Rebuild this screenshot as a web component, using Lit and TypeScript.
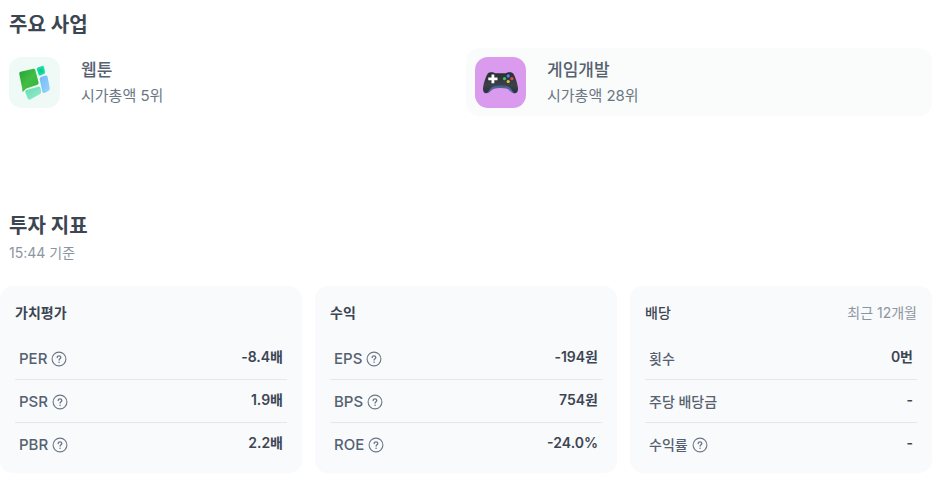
import { LitElement, html, css, svg, nothing } from "lit";
import { customElement, property } from "lit/decorators.js";

interface Metric {
  label: string;
  value: string;
  help?: boolean;
}

interface MetricGroup {
  title: string;
  note?: string;
  rows: Metric[];
}

const groups: MetricGroup[] = [
  {
    title: "가치평가",
    rows: [
      { label: "PER", value: "-8.4배", help: true },
      { label: "PSR", value: "1.9배", help: true },
      { label: "PBR", value: "2.2배", help: true },
    ],
  },
  {
    title: "수익",
    rows: [
      { label: "EPS", value: "-194원", help: true },
      { label: "BPS", value: "754원", help: true },
      { label: "ROE", value: "-24.0%", help: true },
    ],
  },
  {
    title: "배당",
    note: "최근 12개월",
    rows: [
      { label: "횟수", value: "0번" },
      { label: "주당 배당금", value: "-" },
      { label: "수익률", value: "-", help: true },
    ],
  },
];

const webtoonIcon = svg`
  <svg viewBox="0 0 51 51" aria-hidden="true">
    <defs>
      <linearGradient id="leaf" x1="0" y1="0" x2="1" y2="1">
        <stop offset="0" stop-color="#1ea532" /><stop offset="0.5" stop-color="#43bd46" /><stop offset="1" stop-color="#2fb63c" />
      </linearGradient>
      <linearGradient id="sky" x1="0" y1="0" x2="1" y2="1">
        <stop offset="0" stop-color="#73b9f8" /><stop offset="1" stop-color="#9bd3ff" />
      </linearGradient>
      <linearGradient id="mint" x1="0" y1="0" x2="1" y2="1">
        <stop offset="0" stop-color="#62dcae" /><stop offset="1" stop-color="#9aecd0" />
      </linearGradient>
      <radialGradient id="gem"><stop offset="0" stop-color="#00cf69" /><stop offset="1" stop-color="#25dfc0" /></radialGradient>
    </defs>
    <path fill="url(#leaf)" d="M11.5 14.7 24.4 11.8Q25.8 11.5 26.3 12.9L29.6 25.5Q29.9 27 28.5 27.8L17.3 31.6 14 34.8Q13.3 35 13.4 34L13.2 31.4 10.2 16.5Q10 15.1 11.5 14.7Z" />
    <path fill="url(#gem)" d="M28.6 10.5 33 8.9Q34.5 8.5 35 10L36.1 15Q36.3 16.4 35 17L31.7 18.6Q30.1 19 29.5 17.5L27.8 12.5Q27.4 11 28.6 10.5Z" />
    <path fill="url(#sky)" d="M32.4 19.7 36.3 18.6Q38 18.2 38.6 19.8L40.8 31.3Q41 33 39.6 33.8L36 35.8Q34.1 36.6 33.3 34.8L30.7 22.2Q30.3 20.3 32.4 19.7Z" />
    <path fill="url(#mint)" d="M17.4 33.1 29.2 29.7Q30.9 29.3 31.4 30.8L32.2 34.8Q32.4 36.2 31 37.1L21.4 42.4Q19.5 43.2 18.7 41.5L16.4 35.5Q15.8 33.7 17.4 33.1Z" />
  </svg>`;

const gamepadIcon = svg`
  <svg viewBox="0 0 51 51" aria-hidden="true">
    <defs>
      <linearGradient id="shell" x1="0" y1="0" x2="0" y2="1">
        <stop offset="0" stop-color="#292d33" /><stop offset="0.6" stop-color="#3b4149" /><stop offset="1" stop-color="#2b3039" />
      </linearGradient>
      <linearGradient id="glow" x1="0" y1="0" x2="0" y2="1">
        <stop offset="0" stop-color="#46587e" /><stop offset="1" stop-color="#5b80cf" />
      </linearGradient>
    </defs>
    <path fill="url(#shell)" d="M12.6 16.7C14.3 14.8 18.3 14.8 20 16.3H31C32.7 14.8 36.7 14.8 38.4 16.7C40.6 20.3 42.4 26.1 43 31C43.2 34.2 41.9 36.3 39.6 36.3C36.2 36.3 34.7 32.1 31.5 31.3C28 30.7 23 30.7 19.5 31.3C16.3 32.1 14.8 36.3 11.4 36.3C9.1 36.3 7.8 34.2 8 31C8.6 26.1 10.4 20.3 12.6 16.7Z" />
    <path fill="url(#glow)" d="M11.6 36.2C14.4 34.8 15 29.9 19.3 28.9C23 28.1 28 28.1 31.7 28.9C36 29.9 36.6 34.8 39.4 36.2C36.1 36.2 34.8 32.4 31.4 31.6C28 30.9 23 30.9 19.6 31.6C16.2 32.4 14.9 36.2 11.6 36.2Z" />
    <path fill="#fff" d="M16.5 17.4h2.8v3h3.2v2.8h-3.2v3h-2.8v-3h-3.2v-2.8h3.2Z" />
    <circle cx="33.2" cy="18.9" r="1.6" fill="#4d86ee" />
    <circle cx="29.5" cy="21.7" r="1.6" fill="#43bd63" />
    <circle cx="36.9" cy="21.7" r="1.6" fill="#df4b4e" />
    <circle cx="33.2" cy="24.5" r="1.6" fill="#e8c33b" />
  </svg>`;

const helpIcon = svg`
  <svg viewBox="0 0 16 16" fill="none" stroke="currentColor" stroke-linecap="round" aria-hidden="true">
    <circle cx="8" cy="8" r="6.9" stroke-width="1.1" />
    <path stroke-width="1.3" d="M6.2 6.6C6.2 5.4 7 4.8 8 4.8S9.8 5.5 9.8 6.5C9.8 7.7 8.1 7.9 8.1 9.1" />
    <circle cx="8.1" cy="11.2" r=".8" fill="currentColor" stroke="none" />
  </svg>`;

@customElement("metric-card")
export class MetricCard extends LitElement {
  @property({ attribute: false }) group!: MetricGroup;

  static styles = css`
    :host {
      display: block;
      box-sizing: border-box;
      padding: 17px 15px 7px;
      border-radius: 13px;
      background: #f9fafc;
      font-size: 14px;
      line-height: 20px;
    }
    .head {
      display: flex;
      justify-content: space-between;
      margin-bottom: 14px;
    }
    .title {
      margin: 0;
      font-size: 14px;
      font-weight: 600;
      color: #3c4653;
    }
    .title.light {
      font-weight: 500;
    }
    .note {
      color: #8b95a1;
    }
    .table {
      width: 100%;
      border-spacing: 0;
    }
    .label,
    .value {
      height: 43px;
      padding: 1px 4px 0;
      box-sizing: border-box;
      border-bottom: 1px solid #e5e8eb;
    }
    .row:last-child > .label,
    .row:last-child > .value {
      border-bottom-color: transparent;
    }
    .label {
      text-align: left;
      font-weight: 500;
      color: #566170;
    }
    .label-box {
      display: flex;
      align-items: center;
      gap: 4px;
    }
    .latin {
      font-size: 15px;
    }
    .value {
      padding-bottom: 3px;
      text-align: right;
      font-weight: 600;
      color: #3c4653;
    }
    .help {
      display: block;
      width: 16px;
      height: 16px;
      padding: 0;
      border: 0;
      background: none;
      color: #6b7684;
      cursor: pointer;
    }
    .help svg {
      display: block;
    }
  `;

  render() {
    const { title, note, rows } = this.group;
    return html`
      <div class="head">
        <h3 class="title ${note ? "light" : ""}">${title}</h3>
        ${note ? html`<span class="note">${note}</span>` : nothing}
      </div>
      <table class="table" aria-label=${title}>
        <tbody>
          ${rows.map(
            (r) => html`<tr class="row">
              <th class="label" scope="row">
                <div class="label-box">
                  <span class=${/^[A-Z]/.test(r.label) ? "latin" : ""}>${r.label}</span>
                  ${r.help
                    ? html`<button class="help" type="button" aria-label="${r.label} 설명">${helpIcon}</button>`
                    : nothing}
                </div>
              </th>
              <td class="value">${r.value}</td>
            </tr>`
          )}
        </tbody>
      </table>
    `;
  }
}

@customElement("app-root")
export class AppRoot extends LitElement {
  static styles = css`
    :host {
      display: block;
      padding: 8px 4px 11px 0;
      background: #fff;
      color: #3c4653;
      font-family: Inter, "Noto Sans CJK KR", sans-serif;
    }
    .heading {
      margin: 0 9px;
      font-size: 20px;
      line-height: 34px;
      font-weight: 600;
    }
    .businesses {
      display: grid;
      grid-template-columns: 1fr 1fr;
      margin: 6px 0 93px;
    }
    .business {
      display: flex;
      align-items: center;
      gap: 21px;
      padding: 8px 9px;
      border-radius: 13px;
      color: inherit;
      text-decoration: none;
    }
    .business.active {
      background: #fafcfb;
    }
    .thumb {
      flex: none;
      width: 51px;
      height: 51px;
      border-radius: 13px;
      background: #effaf6;
    }
    .thumb.violet {
      background: #da9bef;
    }
    .text {
      padding-top: 2px;
    }
    .name,
    .rank {
      display: block;
      line-height: 25px;
    }
    .name {
      font-size: 17px;
      font-weight: 500;
      color: #566170;
    }
    .rank {
      font-size: 15px;
      color: #6b7684;
    }
    .time {
      margin: 0 9px 23px;
      font-size: 14px;
      line-height: 20px;
      color: #8b95a1;
    }
    .cards {
      display: grid;
      grid-template-columns: repeat(3, 1fr);
      gap: 13px;
    }
  `;

  render() {
    return html`
      <section>
        <h2 class="heading">주요 사업</h2>
        <nav class="businesses">
          <a class="business" href="#webtoon">
            <span class="thumb">${webtoonIcon}</span>
            <span class="text"><span class="name">웹툰</span><span class="rank">시가총액 5위</span></span>
          </a>
          <a class="business active" href="#game">
            <span class="thumb violet">${gamepadIcon}</span>
            <span class="text"><span class="name">게임개발</span><span class="rank">시가총액 28위</span></span>
          </a>
        </nav>
      </section>
      <section>
        <h2 class="heading">투자 지표</h2>
        <p class="time">15:44 기준</p>
        <div class="cards">
          ${groups.map((g) => html`<metric-card .group=${g}></metric-card>`)}
        </div>
      </section>
    `;
  }
}
